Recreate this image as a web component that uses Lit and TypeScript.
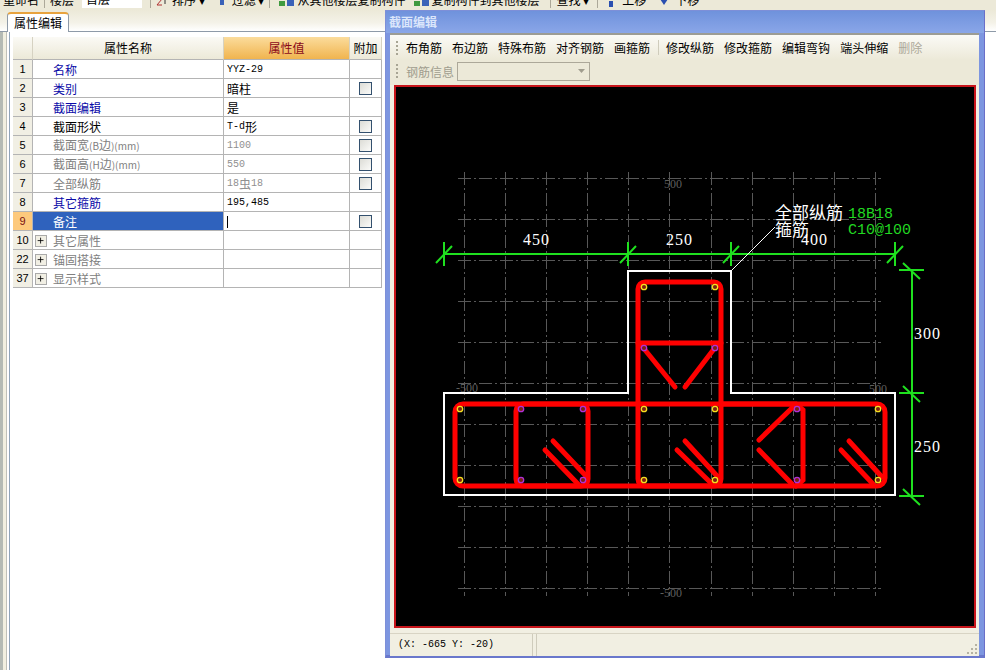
import { css, html, svg, LitElement } from 'lit';
import { customElement } from 'lit/decorators.js';

interface Row {
  idx: number;
  name: string;
  value?: string;
  tone: 'blue' | 'black' | 'gray';
  check?: boolean;
  group?: boolean;
  selected?: boolean;
}

const rows: Row[] = [
  { idx: 1, name: '名称', value: 'YYZ-29', tone: 'blue' },
  { idx: 2, name: '类别', value: '暗柱', tone: 'blue', check: true },
  { idx: 3, name: '截面编辑', value: '是', tone: 'blue' },
  { idx: 4, name: '截面形状', value: 'T-d形', tone: 'black', check: true },
  { idx: 5, name: '截面宽(B边)(mm)', value: '1100', tone: 'gray', check: true },
  { idx: 6, name: '截面高(H边)(mm)', value: '550', tone: 'gray', check: true },
  { idx: 7, name: '全部纵筋', value: '18虫18', tone: 'gray', check: true },
  { idx: 8, name: '其它箍筋', value: '195,485', tone: 'blue' },
  { idx: 9, name: '备注', tone: 'black', check: true, selected: true },
  { idx: 10, name: '其它属性', tone: 'gray', group: true },
  { idx: 22, name: '锚固搭接', tone: 'gray', group: true },
  { idx: 37, name: '显示样式', tone: 'gray', group: true },
];

const gridXs = [464, 505, 546, 587, 628, 669, 711, 752, 793, 834, 875];
const gridYs = [178, 219, 260, 301, 342, 383, 424, 465, 506, 547, 588];

const yellowDots = [[460, 409], [460, 480], [644, 409], [715, 409], [644, 480], [715, 480], [878, 409], [878, 480], [644, 287], [715, 287]];
const purpleDots = [[521, 409], [583, 409], [521, 480], [583, 480], [797, 409], [797, 480], [644, 348], [715, 348]];

// stirrup hooks, x1 y1 x2 y2
const hooks = [
  [545, 450, 578, 484], [553, 441, 587, 477],
  [641, 345, 675, 387], [717, 345, 685, 387],
  [677, 450, 712, 484], [685, 441, 718, 477],
  [759, 440, 793, 407], [759, 450, 792, 484],
  [841, 450, 873, 484], [849, 441, 882, 477],
];

@customElement('app-root')
export class AppRoot extends LitElement {
  static override styles = css`
    :host {
      display: block;
      position: relative;
      width: 996px;
      height: 670px;
      overflow: hidden;
      background: #fff;
      font-family: 'Noto Sans CJK SC', 'Liberation Sans', sans-serif;
      font-size: 12px;
      color: #000;
    }

    .topbar {
      height: 10px;
      overflow: hidden;
      background: #ece9d8;
    }
    .topbar-inner {
      display: flex;
      align-items: center;
      height: 18px;
      margin-top: -10px;
      padding-left: 3px;
      white-space: nowrap;
    }
    .top-input {
      width: 60px;
      height: 18px;
      background: #fff;
      box-sizing: border-box;
      padding-left: 4px;
      margin: 0 3px 0 8px;
    }
    .top-sep {
      width: 1px;
      height: 18px;
      background: #aca899;
      margin: 0 5px;
      flex: none;
    }
    .top-sep.wide { margin-right: 9px; }
    .top-sep.far { margin-left: 11px; }
    .top-sep.near { margin-left: 8px; }
    .top-icon {
      height: 10px;
      margin-top: 8px;
      flex: none;
    }
    .i-sort { width: 12px; margin-right: 4px; }
    .i-filter { width: 12px; margin: 8px 4px 0 11px; }
    .i-copy { width: 16px; margin-right: 2px; }
    .i-copy2 { width: 16px; margin: 8px 1px 0 9px; }
    .i-up { width: 12px; margin: 8px 5px 0 2px; }
    .i-down { width: 12px; margin: 8px 5px 0 12px; }

    .tabstrip {
      display: flex;
      height: 22px;
      padding-left: 7px;
      background: linear-gradient(#ece9d8, #f4f2e8 60%, #fff);
      box-sizing: border-box;
      border-bottom: 1px solid #8e9aa8;
    }
    .tab {
      width: 62px;
      height: 20px;
      margin-top: 2px;
      box-sizing: border-box;
      background: #fff;
      border: 1px solid #8e9aa8;
      border-top: 2px solid #e8a33d;
      border-bottom: none;
      border-radius: 4px 4px 0 0;
      text-align: center;
      line-height: 18px;
    }

    .page {
      display: flex;
    }
    .gutter {
      width: 7px;
      height: 638px;
      flex: none;
      background: linear-gradient(90deg, #b4bab4 0 3px, #f1efe0 3px 6px, #bfc0b8 6px 7px);
    }
    .rail {
      height: 638px;
      margin-left: 2px;
      padding: 5px 0 0 3px;
      border-left: 1px solid #8fa3b8;
      box-sizing: border-box;
    }

    .headrow,
    .grid {
      display: grid;
      grid-template-columns: 20px 191px 126px 32px;
      width: 369px;
    }
    .grid {
      grid-auto-rows: 19px;
    }
    .cell {
      box-sizing: border-box;
      border-right: 1px solid #b4b4b4;
      border-bottom: 1px solid #b4b4b4;
      line-height: 18px;
      white-space: nowrap;
      overflow: hidden;
      display: flex;
      align-items: center;
    }
    .head {
      height: 23px;
      justify-content: center;
      background: linear-gradient(#fbfaf5, #ece9d8);
      border-right-color: #d6d2c2;
      border-bottom-color: #b4b4b4;
    }
    .head.active {
      background: linear-gradient(#fbdc9c, #f0b44f);
      color: #8a0a1a;
    }
    .idx {
      justify-content: center;
      background: #f1efe4;
      font-family: 'Liberation Sans', sans-serif;
      font-size: 11px;
    }
    .idx.on {
      background: #fdc97c;
      color: #7a1010;
    }
    .name {
      padding: 1px 0 0 20px;
    }
    .name.group {
      padding-left: 2px;
    }
    .name.on {
      background: #2f62bd;
      color: #fff;
    }
    .latin {
      font-size: 10px;
    }
    .blue { color: #0a0aa8; }
    .black { color: #000; }
    .gray { color: #808080; }
    .value {
      padding: 1px 0 0 3px;
      font-family: 'Liberation Mono', 'Noto Sans CJK SC', monospace;
      font-size: 10px;
    }
    .value .cjk {
      font-family: 'Noto Sans CJK SC', sans-serif;
      font-size: 12px;
    }
    .value.gray { color: #909090; }
    .caret {
      width: 1px;
      height: 12px;
      background: #000;
    }
    .extra {
      justify-content: center;
    }
    .box {
      width: 13px;
      height: 13px;
      box-sizing: border-box;
      border: 1px solid #33506e;
      background: linear-gradient(135deg, #dcdcd6, #fbfbf9);
    }
    .plus {
      width: 12px;
      height: 12px;
      box-sizing: border-box;
      margin-right: 6px;
      border: 1px solid #aaa;
      background: #f1efe4;
      flex: none;
      display: block;
    }

    .window {
      position: absolute;
      left: 385px;
      top: 10px;
      width: 600px;
      height: 648px;
      box-sizing: border-box;
      border: 1px solid #7d8fd8;
      border-right-color: #6a6fc8;
      border-bottom: 3px solid #6a78cc;
      background: #7d96e0;
      display: flex;
      flex-direction: column;
    }
    .title {
      height: 22px;
      flex: none;
      padding-left: 3px;
      line-height: 21px;
      color: #dbe6fb;
      font-weight: 700;
      background: linear-gradient(#6f92dc, #8aa6e8);
    }
    .client {
      flex: 1;
      margin: 0 5px 0 4px;
      border-top: 2px solid #9c9c94;
      background: #f1efe2;
      display: flex;
      flex-direction: column;
      min-height: 0;
    }
    .tools {
      height: 25px;
      flex: none;
      display: flex;
      align-items: center;
      padding-left: 6px;
      box-sizing: border-box;
      background: linear-gradient(#fbfaf6, #ece9d8);
      white-space: nowrap;
    }
    .tools.second {
      background: #ece9d8;
      padding-bottom: 3px;
    }
    .grip {
      width: 2px;
      height: 14px;
      margin-right: 8px;
      flex: none;
      background: repeating-linear-gradient(#a8a594 0 2px, transparent 2px 4px);
    }
    .btn {
      margin-right: 10px;
    }
    .btn.off { color: #aca899; }
    .tool-sep {
      width: 1px;
      height: 15px;
      background: #cfccbc;
      margin: 0 7px 0 -2px;
    }
    .label-off {
      color: #a09d8e;
      margin-right: 3px;
    }
    .select {
      width: 133px;
      height: 19px;
      box-sizing: border-box;
      border: 1px solid #aca899;
      background: #ece9d8;
      display: flex;
      justify-content: flex-end;
      align-items: center;
      padding-right: 4px;
    }
    .select svg { display: block; }
    .canvas {
      height: 543px;
      flex: none;
      margin: 0 3px 0 4px;
      box-sizing: border-box;
      border: 2px solid #c8151b;
      background: #000;
    }
    .canvas svg {
      display: block;
      width: 578px;
      height: 539px;
    }
    .canvas text {
      font-family: 'Liberation Serif', serif;
    }
    .canvas text.cjk {
      font-family: 'Noto Sans CJK SC', sans-serif;
    }
    .canvas text.mono {
      font-family: 'Liberation Mono', monospace;
    }
    .status {
      flex: 1;
      margin-top: 5px;
      display: flex;
      gap: 3px;
      background: #f1efe2;
      border-top: 1px solid #d8d4c4;
      position: relative;
    }
    .pane {
      width: 143px;
      box-sizing: border-box;
      border-right: 1px solid #cfccbc;
      padding-left: 8px;
      line-height: 22px;
      font-family: 'Liberation Mono', monospace;
      font-size: 10px;
    }
    .pane.rest {
      flex: 1;
      border-left: 1px solid #cfccbc;
      border-right: none;
    }
    .sizer {
      position: absolute;
      right: 1px;
      bottom: 1px;
    }
  `;

  private renderRow(r: Row) {
    const on = r.selected ? 'on' : '';
    return html`
      <div class="cell idx ${on}">${r.idx}</div>
      <div class="cell name ${r.tone} ${on} ${r.group ? 'group' : ''}">
        ${r.group
          ? html`<svg class="plus" viewBox="0 0 12 12"><path d="M2 5.500h7M5.500 2v7" stroke="#000" fill="none"/></svg>`
          : ''}
        <span>${this.renderName(r.name)}</span>
      </div>
      <div class="cell value ${r.tone === 'gray' ? 'gray' : ''}">
        ${r.selected ? html`<span class="caret"></span>` : this.renderValue(r.value)}
      </div>
      <div class="cell extra">${r.check ? html`<span class="box"></span>` : ''}</div>
    `;
  }

  private renderName(n: string) {
    // the (B边)(mm) parts are set smaller than the chinese text
    return n.split(/([\x00-\x7f]+)/).map((part, i) =>
      i % 2 ? html`<span class="latin">${part}</span>` : part);
  }

  private renderValue(v?: string) {
    if (!v) return '';
    return v.split(/([^\x00-\x7f]+)/).map((part, i) =>
      i % 2 ? html`<span class="cjk">${part}</span>` : part);
  }

  private renderDrawing() {
    return svg`
      <g stroke="#585858" stroke-width="1" stroke-dasharray="13 3 2 3" fill="none" shape-rendering="crispEdges">
        ${gridXs.map((x) => svg`<line x1=${x} y1="172" x2=${x} y2="596"></line>`)}
        ${gridYs.map((y) => svg`<line x1="458" y1=${y} x2="881" y2=${y}></line>`)}
      </g>
      <g fill="#5e5e5e" font-size="12">
        <text x="664" y="188">500</text>
        <text x="456" y="392">-500</text>
        <text x="869" y="393">500</text>
        <text x="660" y="597">-500</text>
      </g>
      <path d="M628 271H731V393H895V495H444V393H628Z" fill="none" stroke="#fff" stroke-width="2"></path>
      <g fill="none" stroke="#f00" stroke-width="5" stroke-linecap="round">
        <rect x="455" y="404" width="430" height="82" rx="8"></rect>
        <rect x="516" y="404" width="72" height="82" rx="7"></rect>
        <rect x="638" y="282" width="83" height="204" rx="7"></rect>
        <path d="M638 343H721M720 404H796L803 410V480L796 486"></path>
        ${hooks.map((h) => svg`<line x1=${h[0]} y1=${h[1]} x2=${h[2]} y2=${h[3]}></line>`)}
      </g>
      <g fill="#7a2010" stroke-width="1.300">
        ${yellowDots.map((d) => svg`<circle cx=${d[0]} cy=${d[1]} r="2.700" stroke="#f5e020"></circle>`)}
        ${purpleDots.map((d) => svg`<circle cx=${d[0]} cy=${d[1]} r="2.700" stroke="#b030d8"></circle>`)}
      </g>
      <g stroke="#1fe01f" stroke-width="2" fill="none">
        <path d="M444 254H895M912 270V496"></path>
        ${[444, 628, 731, 895].map((x) => svg`<path d="M${x} 242V266M${x - 8} 263L${x + 8} 246"></path>`)}
        ${[270, 393, 496].map((y) => svg`<path d="M899 ${y}H924M903 ${y - 7}L920 ${y + 9}"></path>`)}
      </g>
      <g fill="#fff" font-size="16" letter-spacing="1">
        <text x="523" y="245">450</text>
        <text x="666" y="245">250</text>
        <text x="801" y="245">400</text>
        <text x="914" y="339">300</text>
        <text x="914" y="452">250</text>
      </g>
      <line x1="731" y1="271" x2="775" y2="227" stroke="#fff" stroke-width="1"></line>
      <g fill="#fff" font-size="17">
        <text class="cjk" x="775" y="219">全部纵筋</text>
        <text class="cjk" x="775" y="236">箍筋</text>
      </g>
      <g fill="#22d822" font-size="15">
        <text class="mono" x="848" y="218">18B18</text>
        <text class="mono" x="848" y="234">C10@100</text>
      </g>
    `;
  }

  override render() {
    return html`
      <div class="topbar">
        <div class="topbar-inner">
          <span>重命名</span>
          <span class="top-sep"></span>
          <span>楼层</span>
          <span class="top-input">首层</span>
          <span class="top-sep"></span>
          <svg class="top-icon i-sort" viewBox="0 0 12 10"><path d="M1 1h5L1 7h5" stroke="#b03030" fill="none"/><path d="M9 0v6" stroke="#333"/></svg>
          <span>排序 ▾</span>
          <svg class="top-icon i-filter" viewBox="0 0 12 10"><rect x="4" width="4" height="7" fill="#3a62b8"/></svg>
          <span>过滤 ▾</span>
          <span class="top-sep wide"></span>
          <svg class="top-icon i-copy" viewBox="0 0 16 10"><rect width="6" height="5" y="3" fill="#3f9a3f"/><rect x="8" width="7" height="8" fill="#3a62b8"/></svg>
          <span>从其他楼层复制构件</span>
          <svg class="top-icon i-copy2" viewBox="0 0 16 10"><rect width="6" height="5" y="3" fill="#3f9a3f"/><rect x="8" width="7" height="8" fill="#3a62b8"/></svg>
          <span>复制构件到其他楼层</span>
          <span class="top-sep far"></span>
          <span>查找 ▾</span>
          <span class="top-sep near"></span>
          <svg class="top-icon i-up" viewBox="0 0 12 10"><path d="M6 9V3" stroke="#2a4fb0" stroke-width="4"/></svg>
          <span>上移</span>
          <svg class="top-icon i-down" viewBox="0 0 12 10"><path d="M2 1h8L6 7z" fill="#2a4fb0"/></svg>
          <span>下移</span>
        </div>
      </div>
      <div class="tabstrip"><div class="tab">属性编辑</div></div>
      <div class="page">
        <div class="gutter"></div>
        <div class="rail">
          <div class="headrow">
            <div class="cell head"></div>
            <div class="cell head">属性名称</div>
            <div class="cell head active">属性值</div>
            <div class="cell head">附加</div>
          </div>
          <div class="grid">${rows.map((r) => this.renderRow(r))}</div>
        </div>
      </div>
      <div class="window">
        <div class="title">截面编辑</div>
        <div class="client">
          <div class="tools">
            <span class="grip"></span>
            <span class="btn">布角筋</span>
            <span class="btn">布边筋</span>
            <span class="btn">特殊布筋</span>
            <span class="btn">对齐钢筋</span>
            <span class="btn">画箍筋</span>
            <span class="tool-sep"></span>
            <span class="btn">修改纵筋</span>
            <span class="btn">修改箍筋</span>
            <span class="btn">编辑弯钩</span>
            <span class="btn">端头伸缩</span>
            <span class="btn off">删除</span>
          </div>
          <div class="tools second">
            <span class="grip"></span>
            <span class="label-off">钢筋信息</span>
            <span class="select">
              <svg width="7" height="4" viewBox="0 0 7 4"><path d="M0 0h7L3.500 4z" fill="#a09d8e"/></svg>
            </span>
          </div>
          <div class="canvas">
            <svg viewBox="396 87 578 539">${this.renderDrawing()}</svg>
          </div>
          <div class="status">
            <div class="pane">(X: -665 Y: -20)</div>
            <div class="pane rest"></div>
            <svg class="sizer" width="11" height="11" viewBox="0 0 11 11" fill="#b5b2a2">
              <rect x="8" y="0" width="2" height="2"/><rect x="4" y="4" width="2" height="2"/><rect x="8" y="4" width="2" height="2"/>
              <rect x="0" y="8" width="2" height="2"/><rect x="4" y="8" width="2" height="2"/><rect x="8" y="8" width="2" height="2"/>
            </svg>
          </div>
        </div>
      </div>
    `;
  }
}
